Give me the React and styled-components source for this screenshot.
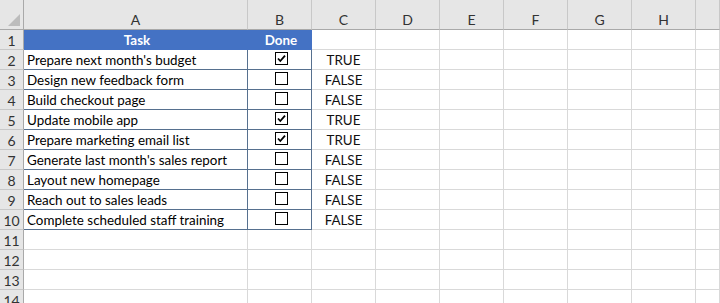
import React from 'react'
import styled, { createGlobalStyle } from 'styled-components'

const GlobalStyle = createGlobalStyle`
    html, body {
        margin: 0;
        padding: 0;
        background: #fff;
        overflow: hidden;
    }
    body {
        font-family: Lato, "Liberation Sans", sans-serif;
    }
`

const Sheet = styled.div`
    display: grid;
    grid-template-columns: 24px 224px repeat(7, 64px) 1fr;
    grid-template-rows: 30px repeat(14, 20px);
    width: 720px;
    height: 303px;
    overflow: hidden;
    font-size: 13.4px;
    color: #000;
`

const ColHead = styled.div`
    box-sizing: border-box;
    background: #e6e6e6;
    border-right: 1px solid #c8c8c8;
    border-bottom: 1px solid #a9a9a9;
    display: flex;
    align-items: flex-end;
    justify-content: center;
    padding-bottom: 1px;
    color: #333;
    font-size: 14px;
`

const Corner = styled(ColHead)`
    position: relative;
    border-right: 1px solid #a9a9a9;

    &::after {
        content: '';
        position: absolute;
        right: 3px;
        bottom: 3px;
        width: 0;
        height: 0;
        border-left: 12px solid transparent;
        border-bottom: 12px solid #bcbcbc;
    }
`

const RowHead = styled.div`
    box-sizing: border-box;
    background: #e6e6e6;
    border-right: 1px solid #a9a9a9;
    border-bottom: 1px solid #c8c8c8;
    display: flex;
    align-items: center;
    justify-content: center;
    padding-top: 1px;
    color: #333;
    font-size: 14px;
`

const Cell = styled.div`
    box-sizing: border-box;
    border-right: 1px solid ${p => (p.$table ? '#56708f' : '#d9d9d9')};
    border-bottom: 1px solid ${p => (p.$table ? '#56708f' : '#d9d9d9')};
    background: ${p => (p.$head ? '#4472c4' : '#fff')};
    color: ${p => (p.$head ? '#fff' : '#000')};
    font-weight: ${p => (p.$head ? 700 : 400)};
    display: flex;
    align-items: center;
    justify-content: ${p => (p.$center ? 'center' : 'flex-start')};
    padding: 1px 0 0 3px;
    white-space: nowrap;
    overflow: hidden;

    ${p => p.$head && `
        border-right-color: #4472c4;
        border-bottom-color: #4472c4;
    `}
`

const BoolCell = styled(Cell)`
    justify-content: center;
    padding-left: 0;
    color: #111;
`

const Box = styled.svg`
    display: block;
    margin-top: -3px;
`

function CheckBox({ checked }) {
    return (
        <Box width="13" height="13" viewBox="0 0 13 13">
            <rect x="0.5" y="0.5" width="12" height="12" fill="#fff" stroke="#000" strokeWidth="1" />
            {checked && (
                <path d="M3 6.5 L5.3 9 L10 3.6" fill="none" stroke="#000" strokeWidth="1.8" />
            )}
        </Box>
    )
}

const tasks = [
    { name: "Prepare next month's budget", done: true },
    { name: 'Design new feedback form', done: false },
    { name: 'Build checkout page', done: false },
    { name: 'Update mobile app', done: true },
    { name: 'Prepare marketing email list', done: true },
    { name: "Generate last month's sales report", done: false },
    { name: 'Layout new homepage', done: false },
    { name: 'Reach out to sales leads', done: false },
    { name: 'Complete scheduled staff training', done: false },
]

const letters = ['A', 'B', 'C', 'D', 'E', 'F', 'G', 'H', '']
const blanks = ['D', 'E', 'F', 'G', 'H', 'I']

export default function App() {
    const rows = []

    rows.push(<RowHead key="r1">1</RowHead>)
    rows.push(<Cell key="a1" $head $center>Task</Cell>)
    rows.push(<Cell key="b1" $head $center>Done</Cell>)
    rows.push(<Cell key="c1" />)
    blanks.forEach(l => rows.push(<Cell key={l + '1'} />))

    tasks.forEach((t, i) => {
        const n = i + 2
        rows.push(<RowHead key={'r' + n}>{n}</RowHead>)
        rows.push(<Cell key={'a' + n} $table>{t.name}</Cell>)
        rows.push(
            <Cell key={'b' + n} $table $center>
                <CheckBox checked={t.done} />
            </Cell>
        )
        rows.push(<BoolCell key={'c' + n}>{t.done ? 'TRUE' : 'FALSE'}</BoolCell>)
        blanks.forEach(l => rows.push(<Cell key={l + n} />))
    })

    for (let n = 11; n <= 14; n++) {
        rows.push(<RowHead key={'r' + n}>{n}</RowHead>)
        rows.push(<Cell key={'a' + n} />)
        rows.push(<Cell key={'b' + n} />)
        rows.push(<Cell key={'c' + n} />)
        blanks.forEach(l => rows.push(<Cell key={l + n} />))
    }

    return (
        <>
            <GlobalStyle />
            <Sheet>
                <Corner />
                {letters.map((l, i) => (
                    <ColHead key={'h' + i}>{l}</ColHead>
                ))}
                {rows}
            </Sheet>
        </>
    )
}
